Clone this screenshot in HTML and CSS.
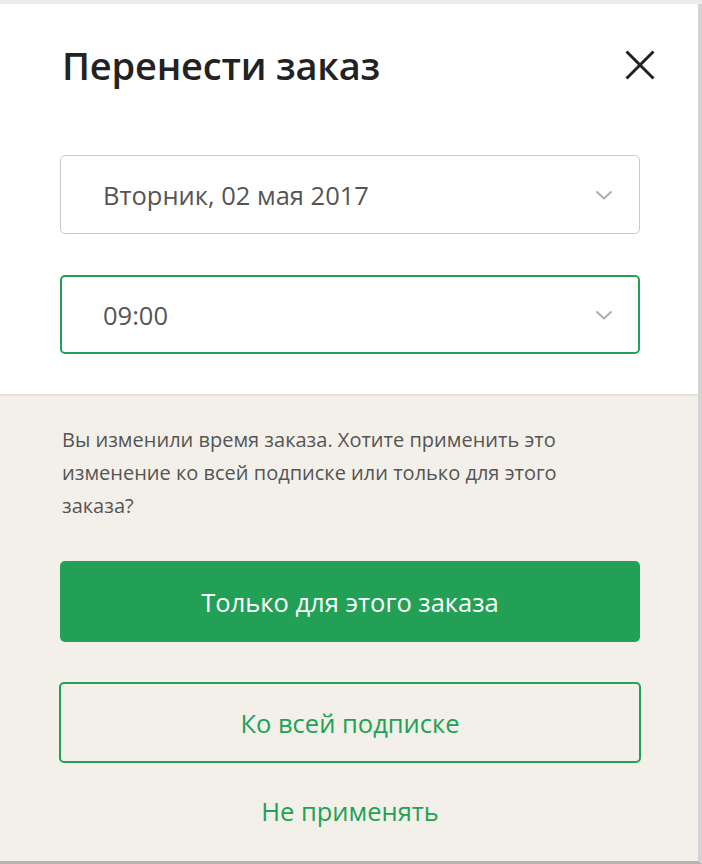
FILE: index.html
```html
<!DOCTYPE html>
<html lang="ru">
<head>
<meta charset="utf-8">
<link rel="stylesheet" href="styles.css">
</head>
<body>
<div class="modal">
  <div class="top">
    <div class="head">
      <h1 class="title">Перенести заказ</h1>
      <button class="close" aria-label="Закрыть">
        <svg width="30" height="30" viewBox="0 0 30 30"><path d="M1.5 1.5L28.5 28.5M28.5 1.5L1.5 28.5" stroke="#222" stroke-width="3" fill="none"/></svg>
      </button>
    </div>
    <div class="select">
      <span class="value">Вторник, 02 мая 2017</span>
      <svg class="chev" width="18" height="10" viewBox="0 0 18 10"><path d="M1.5 1.5L9 8.5L16.5 1.5" stroke="#aaa" stroke-width="2" fill="none"/></svg>
    </div>
    <div class="select active">
      <span class="value">09:00</span>
      <svg class="chev" width="18" height="10" viewBox="0 0 18 10"><path d="M1.5 1.5L9 8.5L16.5 1.5" stroke="#aaa" stroke-width="2" fill="none"/></svg>
    </div>
  </div>
  <div class="bottom">
    <p class="note">Вы изменили время заказа. Хотите применить это изменение ко всей подписке или только для этого заказа?</p>
    <button class="btn primary">Только для этого заказа</button>
    <button class="btn outline">Ко всей подписке</button>
    <button class="link">Не применять</button>
  </div>
</div>
</body>
</html>
```
FILE: styles.css
```css
* { box-sizing: border-box; }
html, body { margin: 0; padding: 0; }
body {
  background: #ececec;
  font-family: "Open Sans", "Noto Sans", sans-serif;
  width: 702px;
  height: 864px;
  overflow: hidden;
}
.modal {
  margin-top: 4px;
  width: 702px;
  height: 860px;
  display: flex;
  flex-direction: column;
  border-bottom: 3px solid #b4b4b4;
  border-right: 4px solid #d4d4d4;
}
.top {
  background: #fff;
  padding: 0 58px 40px 60px;
  border-bottom: 2px solid #e9e1d5;
}
.head {
  display: flex;
  align-items: flex-start;
  justify-content: space-between;
  height: 151px;
  padding-top: 35px;
}
.title {
  margin: 0 0 0 2px;
  font-size: 38px;
  line-height: 52px;
  font-weight: 600;
  color: #222;
  letter-spacing: -0.2px;
}
.close {
  border: 0;
  background: none;
  padding: 0;
  margin-top: 11px;
  margin-right: -15px;
  width: 30px;
  height: 30px;
  display: flex;
}
.select {
  height: 79px;
  border: 1px solid #cacaca;
  border-radius: 5px;
  display: flex;
  align-items: center;
  justify-content: space-between;
  padding: 0 26px 0 42px;
  margin-bottom: 41px;
}
.select:last-child { margin-bottom: 0; }
.select.active { border: 2px solid #22a156; padding-left: 41px; padding-right: 25px; }
.value {
  font-size: 25.5px;
  color: #555;
}
.bottom {
  flex: 1;
  background: #f3f0e9;
  padding: 27px 58px 0 60px;
  display: flex;
  flex-direction: column;
}
.note {
  margin: 0 0 0 2px;
  font-size: 20px;
  line-height: 33px;
  color: #555;
  width: 560px;
}
.btn {
  font-family: inherit;
  height: 81px;
  border-radius: 5px;
  font-size: 25.5px;
  cursor: pointer;
}
.primary {
  margin-top: 39px;
  background: #22a156;
  border: 0;
  color: #fff;
}
.outline {
  margin: 40px -1px 0 -1px;
  height: 81px;
  background: transparent;
  border: 2px solid #22a156;
  color: #22a156;
}
.link {
  font-family: inherit;
  margin-top: 31px;
  align-self: center;
  background: none;
  border: 0;
  color: #22a156;
  font-size: 25.5px;
  padding: 0;
}
```
